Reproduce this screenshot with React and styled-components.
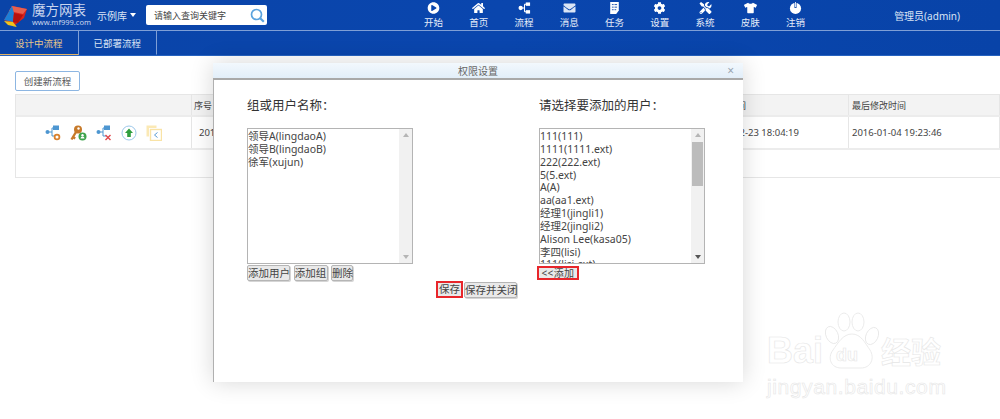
import React from "react";
import styled, { createGlobalStyle } from "styled-components";
import {
  FaPlayCircle,
  FaHome,
  FaEnvelope,
  FaCog,
  FaTools,
  FaTshirt,
} from "react-icons/fa";

const GlobalStyle = createGlobalStyle`
  html, body {
    margin: 0;
    padding: 0;
    background: #fff;
  }
  body {
    width: 1000px;
    height: 419px;
    overflow: hidden;
    font-family: "Noto Sans", "Noto Sans CJK SC", sans-serif;
  }
`;

const Page = styled.div`
  position: relative;
  width: 1000px;
  height: 419px;
  overflow: hidden;
  background: #fff;
`;

const Header = styled.header`
  background: linear-gradient(90deg, #0a44a8 0%, #0a46ae 50%, #0843a8 100%);
  color: #fff;
  border-bottom: 1px solid #2763c0;
`;

const TopBar = styled.div`
  height: 30px;
  display: flex;
  align-items: center;
  border-bottom: 1px solid #7f9fd6;
`;

const Logo = styled.div`
  width: 88px;
  margin-left: 3px;
  display: flex;
  align-items: center;
  gap: 4px;
`;

const LogoText = styled.div`
  display: flex;
  flex-direction: column;
  line-height: 1;
`;

const LogoName = styled.span`
  font-size: 13.5px;
  color: #c9d6ee;
  white-space: nowrap;
  line-height: 15px;
`;

const LogoUrl = styled.span`
  font-size: 7.5px;
  color: #c9d6ee;
  white-space: nowrap;
  margin-top: 1px;
`;

const LibraryPick = styled.div`
  margin-left: 6px;
  width: 49px;
  font-size: 10px;
  color: #dbe5f5;
  white-space: nowrap;
  display: flex;
  align-items: center;
  gap: 3px;
`;

const Caret = styled.i`
  width: 0;
  height: 0;
  border-left: 3.5px solid transparent;
  border-right: 3.5px solid transparent;
  border-top: 4px solid #fff;
`;

const SearchBox = styled.div`
  width: 121px;
  height: 20px;
  background: #fff;
  border-radius: 2px;
  display: flex;
  align-items: center;
  justify-content: space-between;
  padding: 0 2px 0 8px;
  box-sizing: border-box;
  color: #444;
  font-size: 9px;
`;

const Nav = styled.nav`
  display: flex;
  margin-left: 144px;
`;

const NavItem = styled.div`
  width: 45.25px;
  display: flex;
  flex-direction: column;
  align-items: center;
  font-size: 9.5px;
  line-height: 11px;
  color: #e6edf9;
  svg {
    height: 12px;
    width: 13px;
    margin-bottom: 3px;
    color: #fff;
  }
`;

const UserName = styled.div`
  margin-left: auto;
  margin-right: 40px;
  font-size: 10px;
  color: #dbe5f5;
`;

const Tabs = styled.div`
  height: 24px;
  display: flex;
`;

const Tab = styled.div`
  width: 78.5px;
  display: flex;
  align-items: center;
  justify-content: center;
  box-sizing: border-box;
  font-size: 9.5px;
  border-right: 1px solid #7f9fd6;
  color: ${(p) => (p.$active ? "#e7c58a" : "#dbe5f5")};
  border-bottom: 1px solid ${(p) => (p.$active ? "#e3b262" : "transparent")};
`;

const Content = styled.main`
  padding: 15px 0 0 15px;
`;

const CreateButton = styled.div`
  width: 65px;
  height: 20px;
  box-sizing: border-box;
  border: 1px solid #8db6e2;
  border-radius: 2px;
  display: flex;
  align-items: center;
  justify-content: center;
  font-size: 9.5px;
  color: #555;
  margin-bottom: 3px;
`;

const Table = styled.div`
  border: 1px solid #e6e6e6;
  border-right: 0;
  box-sizing: border-box;
  height: 84px;
`;

const Row = styled.div`
  display: grid;
  grid-template-columns: 176px 140px 1fr 151px;
  height: ${(p) => p.$height}px;
  background: ${(p) => (p.$head ? "#f3f3f3" : "#fff")};
  border-bottom: 2px solid #ececec;
  box-sizing: border-box;
`;

const Cell = styled.div`
  display: flex;
  align-items: center;
  gap: 9px;
  border-right: 1px solid #e6e6e6;
  font-size: ${(p) => (p.$head ? 9 : 9.5)}px;
  color: #444;
  white-space: nowrap;
  padding-left: ${(p) => p.$pad ?? 3}px;
  padding-right: ${(p) => p.$padEnd ?? 0}px;
  justify-content: ${(p) => (p.$end ? "flex-end" : p.$center ? "center" : "flex-start")};
`;

const Dialog = styled.section`
  position: absolute;
  left: 213px;
  top: 63px;
  width: 530px;
  height: 319px;
  background: #fff;
  box-shadow: 0 0 22px rgba(0, 0, 0, 0.16);
  display: flex;
  flex-direction: column;
`;

const DialogTitle = styled.div`
  height: 17px;
  box-sizing: border-box;
  background: linear-gradient(180deg, #f2f8fd 0%, #e2eef9 100%);
  border-bottom: 2px solid #a9a9a9;
  display: flex;
  align-items: center;
  justify-content: center;
  position: relative;
  font-size: 10px;
  color: #666;
`;

const Close = styled.span`
  position: absolute;
  right: 9px;
  top: 1px;
  font-size: 12px;
  line-height: 13px;
  color: #9aa6b2;
`;

const DialogBody = styled.div`
  flex: 1;
  border-left: 1px solid #b0b0b0;
`;

const Columns = styled.div`
  display: flex;
  gap: 126px;
  padding: 17px 0 0 33px;
`;

const Column = styled.div`
  width: 166px;
  display: flex;
  flex-direction: column;
  align-items: flex-start;
`;

const ColumnTitle = styled.h3`
  margin: 0 0 13px;
  font-size: 12.5px;
  line-height: 18px;
  font-weight: 400;
  color: #333;
  white-space: nowrap;
`;

const ListBox = styled.div`
  width: 166px;
  height: 136px;
  box-sizing: border-box;
  border: 1px solid #b4b4b4;
  display: flex;
  overflow: hidden;
`;

const Items = styled.div`
  flex: 1;
  overflow: hidden;
  font-size: 10.5px;
  line-height: 12.85px;
  padding-top: 1px;
  color: #444;
  white-space: nowrap;
`;

const Scrollbar = styled.div`
  width: 13px;
  background: #f1f1f1;
  display: flex;
  flex-direction: column;
  align-items: center;
  justify-content: space-between;
  position: relative;
  padding: 4px 0;
  box-sizing: border-box;
`;

const Arrow = styled.i`
  width: 0;
  height: 0;
  border-left: 3px solid transparent;
  border-right: 3px solid transparent;
  ${(p) => (p.$down ? "border-top" : "border-bottom")}: 4px solid ${(p) => p.$color};
`;

const Thumb = styled.div`
  position: absolute;
  left: 1px;
  top: 13px;
  width: 11px;
  height: 44px;
  background: #bcbcbc;
`;

const Buttons = styled.div`
  display: flex;
  gap: 3.5px;
  margin-top: 1px;
`;

const Btn = styled.div`
  box-sizing: border-box;
  height: 16px;
  background: #e9e9e9;
  border: 1px solid #b5b5b5;
  border-radius: 2px;
  box-shadow: 1px 1px 0 #d5d5d5;
  font-size: 10.5px;
  line-height: 14px;
  color: #444;
  text-align: center;
  white-space: nowrap;
  width: ${(p) => p.$w}px;
`;

const MarkedBtn = styled(Btn)`
  height: ${(p) => p.$h}px;
  border: 2px solid #e8262b;
  border-radius: 0;
  line-height: ${(p) => p.$h - 4}px;
  box-shadow: none;
`;

const AddMarked = styled(MarkedBtn)`
  margin: 2px 0 0 -2px;
  font-size: 10px;
  letter-spacing: 0.4px;
`;

const SaveRow = styled.div`
  display: flex;
  justify-content: center;
  gap: 1px;
  padding-right: 4px;
  margin-top: 0;
  align-items: center;
`;

const Watermark = styled.div`
  position: absolute;
  left: 767px;
  top: 312px;
  width: 185px;
  height: 90px;
  color: #fff;
  -webkit-text-stroke: 0.6px #e6e6e6;
  font-family: "Liberation Sans", "Noto Sans CJK SC", sans-serif;
`;

const WmRow = styled.div`
  display: flex;
  align-items: flex-end;
  height: 57px;
  font-weight: 700;
  font-size: 36px;
  line-height: 36px;
  svg {
    margin: 0 2px 0 2px;
  }
`;

const WmCn = styled.span`
  font-size: 30px;
  line-height: 32px;
`;

const WmUrl = styled.div`
  font-size: 21px;
  line-height: 24px;
  margin-top: 6px;
  letter-spacing: 0.6px;
  white-space: nowrap;
`;

// 流程 glyph: a dot feeding two boxes
const FlowIcon = ({ color = "#fff", size = 13 }) => (
  <svg viewBox="0 0 14 14" width={size} height={size} style={{ color }}>
    <circle cx="2.5" cy="7" r="2.5" fill={color} />
    <path d="M4 7h3M7 2.5v9M7 2.5h2M7 11.5h2" stroke={color} strokeWidth="1.2" fill="none" />
    <rect x="8.5" y="0.5" width="5" height="4" fill={color} />
    <rect x="8.5" y="9.5" width="5" height="4" fill={color} />
  </svg>
);

const TaskIcon = () => (
  <svg viewBox="0 0 12 14">
    <path d="M1 0h10v10l-3 4H1z" fill="#fff" />
    <path d="M3 3h2M6 3h3M3 6h2M6 6h3M3 9h2M6 9h2" stroke="#0a44a8" strokeWidth="1" />
  </svg>
);

const PowerIcon = () => (
  <svg viewBox="0 0 14 14">
    <circle cx="7" cy="7.5" r="6.5" fill="#fff" />
    <path d="M7 0v7" stroke="#0a44a8" strokeWidth="2.4" />
    <path d="M7 0v6" stroke="#fff" strokeWidth="1" />
  </svg>
);

const SearchGlyph = () => (
  <svg width="15" height="15" viewBox="0 0 15 15" fill="none" stroke="#5ba3de" strokeWidth="1.7">
    <circle cx="6.5" cy="6.5" r="5" />
    <path d="M10.2 10.2l3.6 3.6" strokeWidth="2.2" />
  </svg>
);

const Logomark = () => (
  <svg width="25" height="24" viewBox="0 0 25 24">
    <path d="M1 17 L9 3 L24 6 L21 15 L12 22z" fill="#d9231c" />
    <path d="M9 3 L24 6 L20 11 L6 8z" fill="#e8604f" />
    <path d="M1 17 L9 3 L11 10 L10 19z" fill="#1d7fd6" />
    <path d="M1 18 L10 19 L14 24 L5 22z" fill="#f2c31b" />
    <path d="M11 10 L20 12 L15 20 L10 19z" fill="#b5120f" />
  </svg>
);

const ActionFlow = ({ mark }) => (
  <svg width="16" height="16" viewBox="0 0 16 16">
    <circle cx="2.5" cy="7" r="2" fill="#4d96d1" />
    <path d="M4 7h3M7 3v8h3M7 3h2" stroke="#4d96d1" strokeWidth="1" fill="none" />
    <rect x="8" y="0.5" width="6" height="4.5" fill="#4d96d1" />
    {mark === "gear" ? (
      <circle cx="12" cy="12" r="2.4" fill="none" stroke="#d9812f" strokeWidth="1.8" />
    ) : (
      <path d="M9.5 10l5 5M14.5 10l-5 5" stroke="#e0474c" strokeWidth="1.4" />
    )}
  </svg>
);

const ActionKey = () => (
  <svg width="17" height="16" viewBox="0 0 17 16">
    <circle cx="8" cy="4.5" r="4" fill="#c77a2a" />
    <circle cx="8.5" cy="3.5" r="1.2" fill="#fff" />
    <path d="M6 7L1.5 14.5M3 12l2.2 1.4" stroke="#c77a2a" strokeWidth="2.4" fill="none" />
    <circle cx="12.5" cy="11.5" r="4" fill="#3fa34d" />
    <circle cx="12.5" cy="10.3" r="1.2" fill="#fff" />
    <path d="M10.5 13.5a2 2 0 0 1 4 0z" fill="#fff" />
  </svg>
);

const ActionUpload = () => (
  <svg width="16" height="16" viewBox="0 0 16 16">
    <circle cx="8" cy="8" r="7" fill="#fff" stroke="#9cc8ea" strokeWidth="1" />
    <path d="M8 3.5L12 8H9.8v4H6.2V8H4z" fill="#2f9e3f" />
  </svg>
);

const ActionCopy = () => (
  <svg width="16" height="16" viewBox="0 0 16 16">
    <path d="M0.5 0.5h10v2.5H3v8.5H0.5z" fill="#fbe9b5" />
    <rect x="4.5" y="4.5" width="11" height="11" fill="#fff" stroke="#f9e3a6" strokeWidth="1.4" />
    <path d="M11.5 7.5L8.5 10l3 2.5" stroke="#5b9bd5" strokeWidth="1" fill="none" />
  </svg>
);

const PawMark = () => (
  <svg width="54" height="57" viewBox="0 0 54 57" fill="#fff" stroke="#e6e6e6" strokeWidth="0.8">
    <ellipse cx="7" cy="23" rx="6" ry="9" transform="rotate(-25 7 23)" />
    <ellipse cx="19" cy="10" rx="6" ry="9" />
    <ellipse cx="33" cy="10" rx="6" ry="9" />
    <ellipse cx="47" cy="24" rx="6" ry="9" transform="rotate(25 47 24)" />
    <path d="M27 22c9 0 13 9 18 16 5 8 1 18-9 18H16C6 56 2 46 8 38c5-7 10-16 19-16z" />
    <text x="11" y="49" fontSize="18" fontFamily="Liberation Sans" strokeWidth="0.6">du</text>
  </svg>
);

const navItems = [
  ["开始", <FaPlayCircle key="i" />],
  ["首页", <FaHome key="i" />],
  ["流程", <FlowIcon key="i" />],
  ["消息", <FaEnvelope key="i" color="#dbe5f5" />],
  ["任务", <TaskIcon key="i" />],
  ["设置", <FaCog key="i" />],
  ["系统", <FaTools key="i" />],
  ["皮肤", <FaTshirt key="i" />],
  ["注销", <PowerIcon key="i" />],
];

const groups = ["领导A(lingdaoA)", "领导B(lingdaoB)", "徐军(xujun)"];
const users = [
  "111(111)",
  "1111(1111.ext)",
  "222(222.ext)",
  "5(5.ext)",
  "A(A)",
  "aa(aa1.ext)",
  "经理1(jingli1)",
  "经理2(jingli2)",
  "Alison Lee(kasa05)",
  "李四(lisi)",
  "111(lisi.ext)",
];

export default function App() {
  return (
    <Page>
      <GlobalStyle />
      <Header>
        <TopBar>
          <Logo>
            <Logomark />
            <LogoText>
              <LogoName>魔方网表</LogoName>
              <LogoUrl>www.mf999.com</LogoUrl>
            </LogoText>
          </Logo>
          <LibraryPick>
            示例库 <Caret />
          </LibraryPick>
          <SearchBox>
            请输入查询关键字
            <SearchGlyph />
          </SearchBox>
          <Nav>
            {navItems.map(([label, icon]) => (
              <NavItem key={label}>
                {icon}
                {label}
              </NavItem>
            ))}
          </Nav>
          <UserName>管理员(admin)</UserName>
        </TopBar>
        <Tabs>
          <Tab $active>设计中流程</Tab>
          <Tab>已部署流程</Tab>
        </Tabs>
      </Header>

      <Content>
        <CreateButton>创建新流程</CreateButton>
        <Table>
          <Row $head $height={22}>
            <Cell />
            <Cell $head $pad={2}>序号</Cell>
            <Cell $head $end $pad={0} $padEnd={102}>创建时间</Cell>
            <Cell $head>最后修改时间</Cell>
          </Row>
          <Row $height={33}>
            <Cell $center $pad={0}>
              <ActionFlow mark="gear" />
              <ActionKey />
              <ActionFlow mark="x" />
              <ActionUpload />
              <ActionCopy />
            </Cell>
            <Cell $pad={7}>201</Cell>
            <Cell $end $pad={0} $padEnd={49}>2015-12-23 18:04:19</Cell>
            <Cell>2016-01-04 19:23:46</Cell>
          </Row>
        </Table>
      </Content>

      <Dialog>
        <DialogTitle>
          权限设置
          <Close>×</Close>
        </DialogTitle>
        <DialogBody>
          <Columns>
            <Column>
              <ColumnTitle>组或用户名称：</ColumnTitle>
              <ListBox>
                <Items>
                  {groups.map((g) => (
                    <div key={g}>{g}</div>
                  ))}
                </Items>
                <Scrollbar>
                  <Arrow $color="#b5b5b5" />
                  <Arrow $down $color="#b5b5b5" />
                </Scrollbar>
              </ListBox>
              <Buttons>
                <Btn $w={43}>添加用户</Btn>
                <Btn $w={34}>添加组</Btn>
                <Btn $w={22}>删除</Btn>
              </Buttons>
            </Column>
            <Column>
              <ColumnTitle>请选择要添加的用户：</ColumnTitle>
              <ListBox>
                <Items>
                  {users.map((u) => (
                    <div key={u}>{u}</div>
                  ))}
                </Items>
                <Scrollbar>
                  <Arrow $color="#b5b5b5" />
                  <Thumb />
                  <Arrow $down $color="#555" />
                </Scrollbar>
              </ListBox>
              <AddMarked $w={42} $h={14}>&lt;&lt;添加</AddMarked>
            </Column>
          </Columns>
          <SaveRow>
            <MarkedBtn $w={27} $h={17}>保存</MarkedBtn>
            <Btn $w={53}>保存并关闭</Btn>
          </SaveRow>
        </DialogBody>
      </Dialog>

      <Watermark>
        <WmRow>
          Bai
          <PawMark />
          <WmCn>经验</WmCn>
        </WmRow>
        <WmUrl>jingyan.baidu.com</WmUrl>
      </Watermark>
    </Page>
  );
}
